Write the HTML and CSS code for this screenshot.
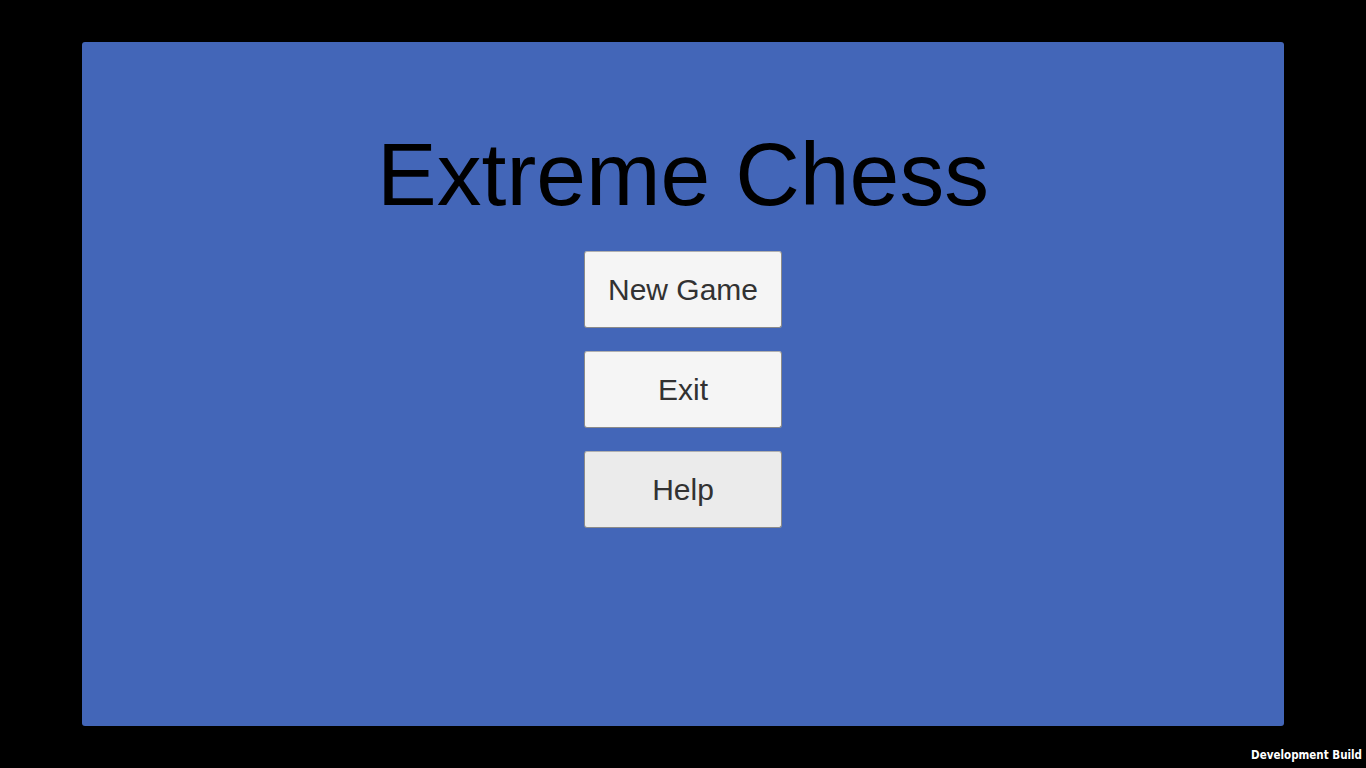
FILE: index.html
```html
<!DOCTYPE html>
<html>
<head>
<meta charset="utf-8">
<link rel="stylesheet" href="styles.css">
</head>
<body>
<div class="screen">
  <main class="panel">
    <h1 class="title">Extreme Chess</h1>
    <div class="menu">
      <button class="btn">New Game</button>
      <button class="btn">Exit</button>
      <button class="btn btn-hover">Help</button>
    </div>
  </main>
  <div class="devbuild">Development Build</div>
</div>
</body>
</html>
```

FILE: styles.css
```css
html, body {
  margin: 0;
  padding: 0;
  background: #000;
}
.screen {
  width: 1366px;
  height: 768px;
  box-sizing: border-box;
  padding: 42px 82px 42px 82px;
  position: relative;
}
.panel {
  height: 684px;
  background: #4366b8;
  border-radius: 3px;
  display: flex;
  flex-direction: column;
  align-items: center;
}
.title {
  margin: 0;
  margin-top: 77px;
  font-family: "Liberation Sans", Arial, sans-serif;
  font-weight: normal;
  font-size: 89.5px;
  line-height: 110px;
  color: #000;
  height: 110px;
}
.menu {
  margin-top: 22px;
  display: flex;
  flex-direction: column;
  gap: 23px;
}
.btn {
  width: 198px;
  height: 77px;
  box-sizing: border-box;
  background: #f5f5f5;
  border: 1px solid #8a8a8a;
  border-top-color: #b0b0b0;
  border-radius: 3px;
  font-family: "Liberation Sans", Arial, sans-serif;
  font-size: 30px;
  color: #323232;
  padding: 0;
  margin: 0;
}
.btn-hover {
  background: #ebebeb;
}
.devbuild {
  position: absolute;
  right: 4px;
  bottom: 6px;
  font-family: "DejaVu Sans Condensed", "DejaVu Sans", sans-serif;
  font-weight: bold;
  font-size: 11.5px;
  color: #fff;
}
```
